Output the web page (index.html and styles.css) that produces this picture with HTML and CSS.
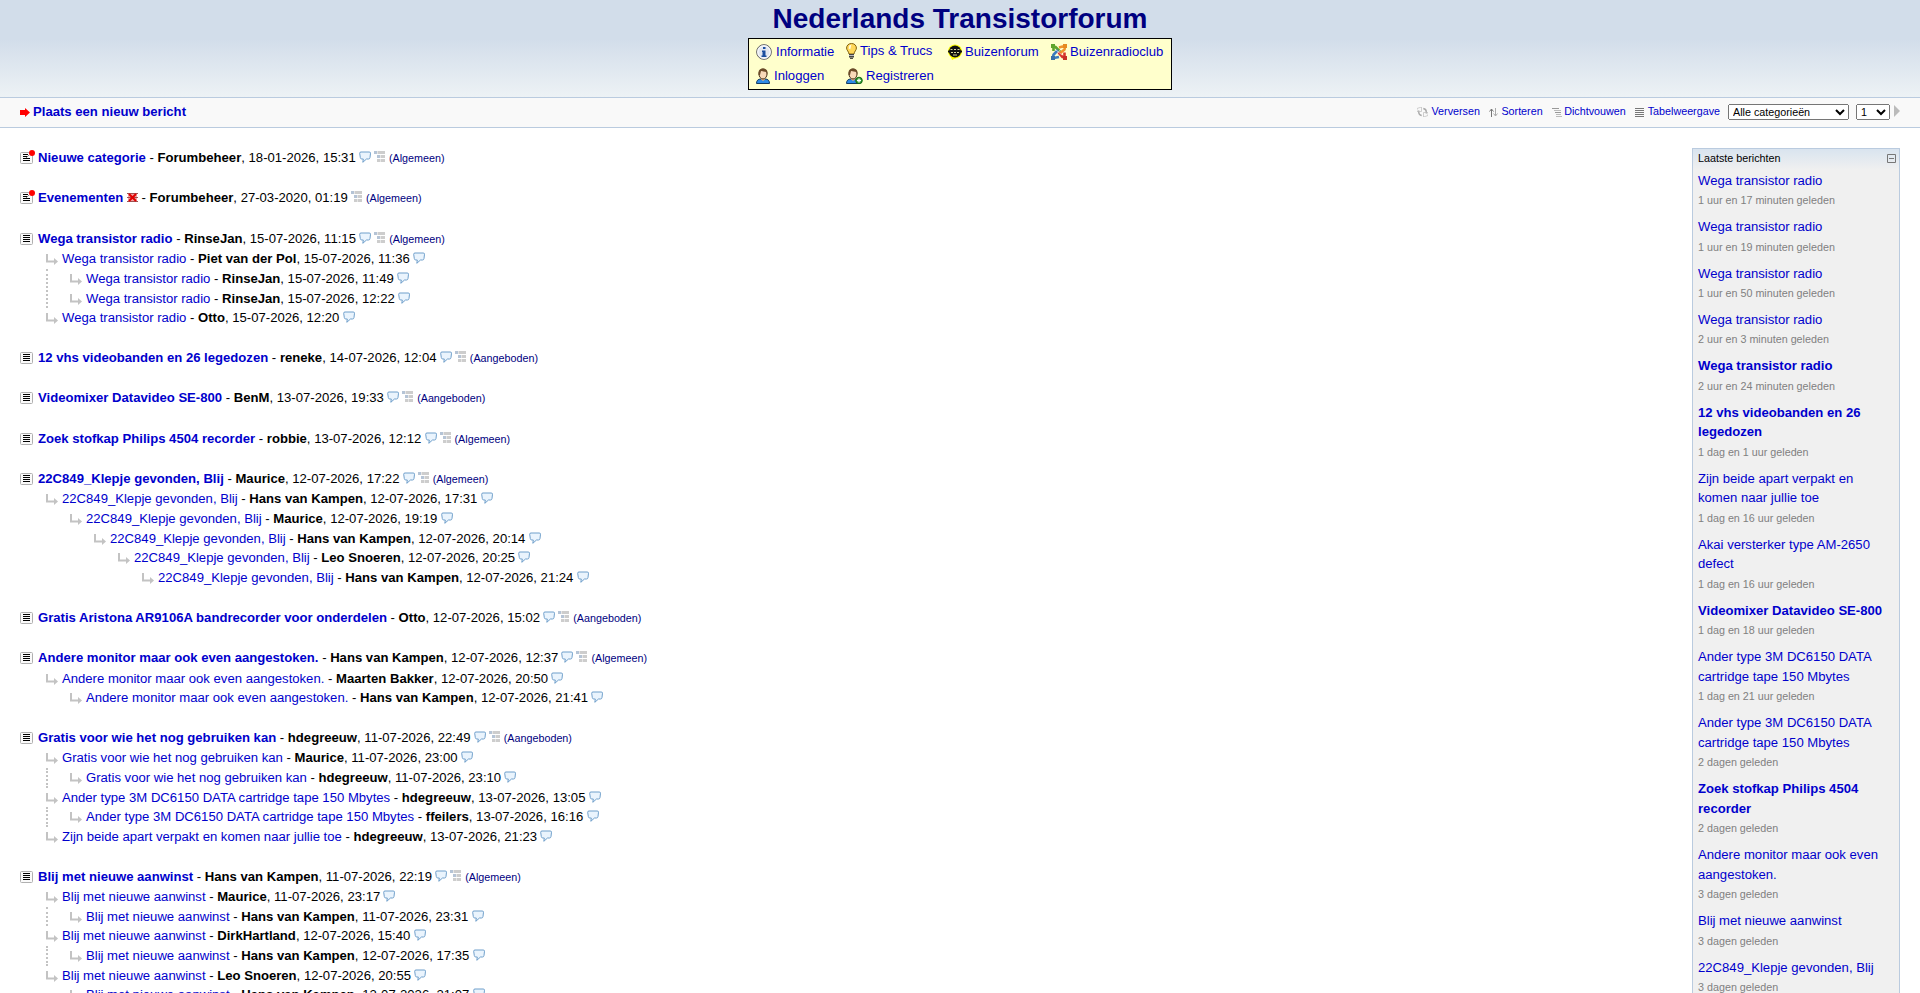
FILE: index.html
```html
<!DOCTYPE html>
<html lang="nl">
<head>
    <meta charset="UTF-8">
    <title>Nederlands Transistorforum</title>
    <link rel="stylesheet" href="styles.css">
</head>
<body>

    <!-- icons -->
    <svg class="symbols">
        <symbol id="thread" viewBox="0 0 13 12">
            <rect x=".5" y=".5" width="12" height="11" rx="1" fill="#fafafa" stroke="#b0b0b0"/>
            <path d="M3 2h7v1H3zM3 4h7v1H3zM3 6h7v1H3zM3 8h7v1H3z" fill="#000" shape-rendering="crispEdges"/>
        </symbol>
        <symbol id="sticky" viewBox="0 0 15 14">
            <rect x=".5" y="2.5" width="12" height="11" rx="1" fill="#fafafa" stroke="#b0b0b0"/>
            <path d="M3 4h5v1H3zM3 6h5v1H3zM3 8h7v1H3zM3 10h7v1H3z" fill="#000" shape-rendering="crispEdges"/>
            <path d="M6 8l3-3" stroke="#888"/>
            <circle cx="12" cy="3" r="3" fill="#f00"/>
        </symbol>
        <symbol id="reply" viewBox="0 0 12 11">
            <path d="M1 0v7.500H9" fill="none" stroke="#c3c3c3" stroke-width="2"/>
            <path d="M8 4l4 3.500-4 3.500z" fill="#c3c3c3"/>
        </symbol>
        <symbol id="bubble" viewBox="0 0 12 12">
            <path d="M2 1h8.200q1.400 0 1.300 1.200L11 6.500q-.2 1.500-1.500 1.500H7.500L3.800 11.300 4.300 8H2.800Q1.500 8 1.300 6.500L.7 2.300Q.6 1 2 1z" fill="#eaf4fd" stroke="#6f9fcb"/>
        </symbol>
        <symbol id="tree" viewBox="0 0 12 12">
            <path d="M0 0h3v3H0zM3 4h3v3H3z" fill="#b5c4d6"/>
            <path d="M3.500 0H11v3H3.500zM6.500 4H11v3H6.500zM3 8h3v3H3zM6.500 8H11v3H6.500z" fill="#cdcdcd"/>
        </symbol>
        <symbol id="closed" viewBox="0 0 11 9">
            <path d="M1 1h9v7H1z" fill="#f3a3a3"/>
            <path d="M0 .5h11M0 8.500h11M0 4.500h11" stroke="#a05050"/>
            <path d="M2 1l7 7M9 1L2 8" stroke="#e00000" stroke-width="2"/>
        </symbol>
    </svg>

    <div id="top">
        <h1>Nederlands Transistorforum</h1>
        <div class="menu">
            <a class="info" href="#"><svg width="16" height="16" viewBox="0 0 16 16"><circle cx="8" cy="8" r="7.400" fill="#e3e7ef" stroke="#666"/><circle cx="8" cy="8" r="6.200" fill="none" stroke="#fff"/><path d="M7 3h2.500v2H7zM6 6.500h3.500v5h1V13H5.500v-1.500h1V8H6z" fill="#1c4fa0"/></svg>Informatie</a>
            <a class="tips" href="#"><svg width="11" height="16" viewBox="0 0 11 16"><path d="M5.500.5C2.500.5.600 2.500.600 5c0 2.500 2.100 3.200 2.400 6h5c.3-2.800 2.400-3.500 2.400-6C10.400 2.500 8.500.5 5.500.5z" fill="#ffd95a" stroke="#80600f"/><path d="M3.300 2.500l2-.7-1 4.500-1.600-.8z" fill="#fffbe0"/><path d="M3 11h5v3.500H3z" fill="#444"/><path d="M3 12.500h5" stroke="#bbb"/><path d="M4 15.300h3" stroke="#222"/></svg>Tips &amp; Trucs</a>
            <a class="tubes" href="#"><svg width="14" height="16" viewBox="0 0 14 16"><circle cx="7" cy="7.500" r="7" fill="#ff0"/><path d="M3 13h7l-6 3z" fill="#ff0"/><circle cx="7" cy="7.500" r="6" fill="#111"/><path d="M0 7.500h14" stroke="#111" stroke-width="2"/><path d="M2.500 5.500h2M6 5.500h2M9.500 5.500h2M3 8.500h2M6 8.500h2M9 8.500h2M5 11h4" stroke="#d5d59a"/></svg>Buizenforum</a>
            <a class="club" href="#"><svg width="16" height="16" viewBox="0 0 16 16"><g fill="none" stroke-width="2.600"><path d="M2.500 7V4.500q0-2 2-1.500l5 5" stroke="#5fa52c"/><path d="M8 3.500l3.500-1q3 0 2 3L8 10" stroke="#f0932b"/><path d="M13.500 8.500v3q0 2-2 1.500L7 8" stroke="#d8342b"/><path d="M8 13l-4 .8q-2.500-.3-1.500-3L7 6" stroke="#3a7cbf"/></g><path d="M5 6l6 5M10 5l-5 6" stroke="#fff" stroke-width=".6"/><path d="M0 0h4v4H0z" fill="#5fa52c"/><path d="M12 0h4v4h-4z" fill="#e58a20"/><path d="M12 12h4v4h-4z" fill="#c62f26"/><path d="M0 12h4v4H0z" fill="#376fa8"/></svg>Buizenradioclub</a>
            <a class="login" href="#"><svg width="14" height="16" viewBox="0 0 14 16"><path d="M.5 15.500c0-3 1.500-4.500 4.500-4.500h4c3 0 4.500 1.500 4.500 4.500z" fill="#2f8be6" stroke="#123a60"/><path d="M5 9h4v2.500L7 13l-2-1.500z" fill="#e3b486"/><ellipse cx="7" cy="6" rx="4" ry="5" fill="#f8d9b8" stroke="#4b3018"/><path d="M2.500 7V4Q3 .5 7 .5T11.500 4v3L10.500 4 5 3 4 7z" fill="#6b4a28"/></svg>Inloggen</a>
            <a class="register" href="#"><svg width="17" height="16" viewBox="0 0 17 16"><path d="M.5 15.500c0-3 1.500-4.500 4.500-4.500h4c3 0 4.500 1.500 4.500 4.500z" fill="#2f8be6" stroke="#123a60"/><path d="M5 9h4v2.500L7 13l-2-1.500z" fill="#e3b486"/><ellipse cx="7" cy="6" rx="4" ry="5" fill="#f8d9b8" stroke="#4b3018"/><path d="M2.500 7V4Q3 .5 7 .5T11.500 4v3L10.500 4 5 3 4 7z" fill="#6b4a28"/><circle cx="13" cy="12.500" r="3.300" fill="#2f9e2f" stroke="#176617"/><path d="M13 10.500v4M11 12.500h4" stroke="#fff" stroke-width="1.300"/></svg>Registreren</a>
        </div>
    </div>

    <div id="topnav">
        <a class="new" href="#"><svg width="10" height="9" viewBox="0 0 10 9"><path d="M0 2h5V0l5 4.500L5 9V7H0z" fill="#f00"/></svg>Plaats een nieuw bericht</a>
        <div class="tools">
            <a class="refresh" href="#"><svg width="11" height="10" viewBox="0 0 11 10"><path d="M1.700 3.500v1.500q0 3 3 3.500M9.300 6.500V5q0-3-3-3.500" fill="none" stroke="#aaa" stroke-width="1.400"/><path d="M0 4.500h4.500V0L0 1.500zM11 5.500H6.500V10L11 8.500z" fill="none" stroke="#bbb" stroke-width=".7"/></svg>Verversen</a>
            <a class="order" href="#"><svg width="9" height="9" viewBox="0 0 9 9"><path d="M2.500 9V1M.5 3.500l2-2.500 2 2.500" fill="none" stroke="#777"/><path d="M6.500 0v8M4.500 5.500l2 2.500 2-2.500" fill="none" stroke="#aaa"/></svg>Sorteren</a>
            <a class="fold" href="#"><svg width="10" height="9" viewBox="0 0 10 9"><path d="M0 .5h7M3 4.500h6" stroke="#999"/><path d="M2 2.500h7M4 6.500h5M4 8.500h6" stroke="#bbb"/></svg>Dichtvouwen</a>
            <a class="table" href="#"><svg width="9" height="9" viewBox="0 0 9 9"><path d="M0 .5h9M0 2.500h9M0 4.500h9M0 6.500h9M0 8.500h9" stroke="#777"/></svg>Tabelweergave</a>
            <select class="category"><option>Alle categorieën</option></select>
            <select class="page"><option>1</option></select>
            <svg class="next" width="6" height="12" viewBox="0 0 6 12"><path d="M0 0l6 6-6 6z" fill="#bbb"/></svg>
        </div>
    </div>

    <div id="content">
        <div id="threads">

            <div class="thread">
                <p class="root"><svg class="st"><use href="#sticky"/></svg><a href="#">Nieuwe categorie</a> - <b>Forumbeheer</b>, 18-01-2026, 15:31 <svg class="bb"><use href="#bubble"/></svg><svg class="tr"><use href="#tree"/></svg><a class="cat" href="#">(Algemeen)</a></p>
            </div>

            <div class="thread">
                <p class="root"><svg class="st"><use href="#sticky"/></svg><a href="#">Evenementen</a> <svg class="cl"><use href="#closed"/></svg> - <b>Forumbeheer</b>, 27-03-2020, 01:19 <svg class="tr first"><use href="#tree"/></svg><a class="cat" href="#">(Algemeen)</a></p>
            </div>

            <div class="thread">
                <p class="root"><svg class="th"><use href="#thread"/></svg><a href="#">Wega transistor radio</a> - <b>RinseJan</b>, 15-07-2026, 11:15 <svg class="bb"><use href="#bubble"/></svg><svg class="tr"><use href="#tree"/></svg><a class="cat" href="#">(Algemeen)</a></p>
                <ul>
                    <li><p><svg class="re"><use href="#reply"/></svg><a href="#">Wega transistor radio</a> - <b>Piet van der Pol</b>, 15-07-2026, 11:36 <svg class="bb"><use href="#bubble"/></svg></p>
                        <ul class="line">
                            <li><p><svg class="re"><use href="#reply"/></svg><a href="#">Wega transistor radio</a> - <b>RinseJan</b>, 15-07-2026, 11:49 <svg class="bb"><use href="#bubble"/></svg></p></li>
                            <li><p><svg class="re"><use href="#reply"/></svg><a href="#">Wega transistor radio</a> - <b>RinseJan</b>, 15-07-2026, 12:22 <svg class="bb"><use href="#bubble"/></svg></p></li>
                        </ul>
                    </li>
                    <li><p><svg class="re"><use href="#reply"/></svg><a href="#">Wega transistor radio</a> - <b>Otto</b>, 15-07-2026, 12:20 <svg class="bb"><use href="#bubble"/></svg></p></li>
                </ul>
            </div>

            <div class="thread">
                <p class="root"><svg class="th"><use href="#thread"/></svg><a href="#">12 vhs videobanden en 26 legedozen</a> - <b>reneke</b>, 14-07-2026, 12:04 <svg class="bb"><use href="#bubble"/></svg><svg class="tr"><use href="#tree"/></svg><a class="cat" href="#">(Aangeboden)</a></p>
            </div>

            <div class="thread">
                <p class="root"><svg class="th"><use href="#thread"/></svg><a href="#">Videomixer Datavideo SE-800</a> - <b>BenM</b>, 13-07-2026, 19:33 <svg class="bb"><use href="#bubble"/></svg><svg class="tr"><use href="#tree"/></svg><a class="cat" href="#">(Aangeboden)</a></p>
            </div>

            <div class="thread">
                <p class="root"><svg class="th"><use href="#thread"/></svg><a href="#">Zoek stofkap Philips 4504 recorder</a> - <b>robbie</b>, 13-07-2026, 12:12 <svg class="bb"><use href="#bubble"/></svg><svg class="tr"><use href="#tree"/></svg><a class="cat" href="#">(Algemeen)</a></p>
            </div>

            <div class="thread">
                <p class="root"><svg class="th"><use href="#thread"/></svg><a href="#">22C849_Klepje gevonden, Blij</a> - <b>Maurice</b>, 12-07-2026, 17:22 <svg class="bb"><use href="#bubble"/></svg><svg class="tr"><use href="#tree"/></svg><a class="cat" href="#">(Algemeen)</a></p>
                <ul>
                    <li><p><svg class="re"><use href="#reply"/></svg><a href="#">22C849_Klepje gevonden, Blij</a> - <b>Hans van Kampen</b>, 12-07-2026, 17:31 <svg class="bb"><use href="#bubble"/></svg></p>
                        <ul>
                            <li><p><svg class="re"><use href="#reply"/></svg><a href="#">22C849_Klepje gevonden, Blij</a> - <b>Maurice</b>, 12-07-2026, 19:19 <svg class="bb"><use href="#bubble"/></svg></p>
                                <ul>
                                    <li><p><svg class="re"><use href="#reply"/></svg><a href="#">22C849_Klepje gevonden, Blij</a> - <b>Hans van Kampen</b>, 12-07-2026, 20:14 <svg class="bb"><use href="#bubble"/></svg></p>
                                        <ul>
                                            <li><p><svg class="re"><use href="#reply"/></svg><a href="#">22C849_Klepje gevonden, Blij</a> - <b>Leo Snoeren</b>, 12-07-2026, 20:25 <svg class="bb"><use href="#bubble"/></svg></p>
                                                <ul>
                                                    <li><p><svg class="re"><use href="#reply"/></svg><a href="#">22C849_Klepje gevonden, Blij</a> - <b>Hans van Kampen</b>, 12-07-2026, 21:24 <svg class="bb"><use href="#bubble"/></svg></p></li>
                                                </ul>
                                            </li>
                                        </ul>
                                    </li>
                                </ul>
                            </li>
                        </ul>
                    </li>
                </ul>
            </div>

            <div class="thread">
                <p class="root"><svg class="th"><use href="#thread"/></svg><a href="#">Gratis Aristona AR9106A bandrecorder voor onderdelen</a> - <b>Otto</b>, 12-07-2026, 15:02 <svg class="bb"><use href="#bubble"/></svg><svg class="tr"><use href="#tree"/></svg><a class="cat" href="#">(Aangeboden)</a></p>
            </div>

            <div class="thread">
                <p class="root"><svg class="th"><use href="#thread"/></svg><a href="#">Andere monitor maar ook even aangestoken.</a> - <b>Hans van Kampen</b>, 12-07-2026, 12:37 <svg class="bb"><use href="#bubble"/></svg><svg class="tr"><use href="#tree"/></svg><a class="cat" href="#">(Algemeen)</a></p>
                <ul>
                    <li><p><svg class="re"><use href="#reply"/></svg><a href="#">Andere monitor maar ook even aangestoken.</a> - <b>Maarten Bakker</b>, 12-07-2026, 20:50 <svg class="bb"><use href="#bubble"/></svg></p>
                        <ul>
                            <li><p><svg class="re"><use href="#reply"/></svg><a href="#">Andere monitor maar ook even aangestoken.</a> - <b>Hans van Kampen</b>, 12-07-2026, 21:41 <svg class="bb"><use href="#bubble"/></svg></p></li>
                        </ul>
                    </li>
                </ul>
            </div>

            <div class="thread">
                <p class="root"><svg class="th"><use href="#thread"/></svg><a href="#">Gratis voor wie het nog gebruiken kan</a> - <b>hdegreeuw</b>, 11-07-2026, 22:49 <svg class="bb"><use href="#bubble"/></svg><svg class="tr"><use href="#tree"/></svg><a class="cat" href="#">(Aangeboden)</a></p>
                <ul>
                    <li><p><svg class="re"><use href="#reply"/></svg><a href="#">Gratis voor wie het nog gebruiken kan</a> - <b>Maurice</b>, 11-07-2026, 23:00 <svg class="bb"><use href="#bubble"/></svg></p>
                        <ul class="line">
                            <li><p><svg class="re"><use href="#reply"/></svg><a href="#">Gratis voor wie het nog gebruiken kan</a> - <b>hdegreeuw</b>, 11-07-2026, 23:10 <svg class="bb"><use href="#bubble"/></svg></p></li>
                        </ul>
                    </li>
                    <li><p><svg class="re"><use href="#reply"/></svg><a href="#">Ander type 3M DC6150 DATA cartridge tape 150 Mbytes</a> - <b>hdegreeuw</b>, 13-07-2026, 13:05 <svg class="bb"><use href="#bubble"/></svg></p>
                        <ul class="line">
                            <li><p><svg class="re"><use href="#reply"/></svg><a href="#">Ander type 3M DC6150 DATA cartridge tape 150 Mbytes</a> - <b>ffeilers</b>, 13-07-2026, 16:16 <svg class="bb"><use href="#bubble"/></svg></p></li>
                        </ul>
                    </li>
                    <li><p><svg class="re"><use href="#reply"/></svg><a href="#">Zijn beide apart verpakt en komen naar jullie toe</a> - <b>hdegreeuw</b>, 13-07-2026, 21:23 <svg class="bb"><use href="#bubble"/></svg></p></li>
                </ul>
            </div>

            <div class="thread">
                <p class="root"><svg class="th"><use href="#thread"/></svg><a href="#">Blij met nieuwe aanwinst</a> - <b>Hans van Kampen</b>, 11-07-2026, 22:19 <svg class="bb"><use href="#bubble"/></svg><svg class="tr"><use href="#tree"/></svg><a class="cat" href="#">(Algemeen)</a></p>
                <ul>
                    <li><p><svg class="re"><use href="#reply"/></svg><a href="#">Blij met nieuwe aanwinst</a> - <b>Maurice</b>, 11-07-2026, 23:17 <svg class="bb"><use href="#bubble"/></svg></p>
                        <ul class="line">
                            <li><p><svg class="re"><use href="#reply"/></svg><a href="#">Blij met nieuwe aanwinst</a> - <b>Hans van Kampen</b>, 11-07-2026, 23:31 <svg class="bb"><use href="#bubble"/></svg></p></li>
                        </ul>
                    </li>
                    <li><p><svg class="re"><use href="#reply"/></svg><a href="#">Blij met nieuwe aanwinst</a> - <b>DirkHartland</b>, 12-07-2026, 15:40 <svg class="bb"><use href="#bubble"/></svg></p>
                        <ul class="line">
                            <li><p><svg class="re"><use href="#reply"/></svg><a href="#">Blij met nieuwe aanwinst</a> - <b>Hans van Kampen</b>, 12-07-2026, 17:35 <svg class="bb"><use href="#bubble"/></svg></p></li>
                        </ul>
                    </li>
                    <li><p><svg class="re"><use href="#reply"/></svg><a href="#">Blij met nieuwe aanwinst</a> - <b>Leo Snoeren</b>, 12-07-2026, 20:55 <svg class="bb"><use href="#bubble"/></svg></p>
                        <ul>
                            <li><p><svg class="re"><use href="#reply"/></svg><a href="#">Blij met nieuwe aanwinst</a> - <b>Hans van Kampen</b>, 12-07-2026, 21:07 <svg class="bb"><use href="#bubble"/></svg></p></li>
                        </ul>
                    </li>
                </ul>
            </div>
        </div>

        <div id="latest">
            <h3>Laatste berichten <svg width="9" height="9" viewBox="0 0 9 9"><path d="M.5.5h8v8h-8zM2 4.500h5" fill="none" stroke="#777"/></svg></h3>
            <ul>
                <li><a href="#">Wega transistor radio</a><span>1 uur en 17 minuten geleden</span></li>
                <li><a href="#">Wega transistor radio</a><span>1 uur en 19 minuten geleden</span></li>
                <li><a href="#">Wega transistor radio</a><span>1 uur en 50 minuten geleden</span></li>
                <li><a href="#">Wega transistor radio</a><span>2 uur en 3 minuten geleden</span></li>
                <li><a class="start" href="#">Wega transistor radio</a><span>2 uur en 24 minuten geleden</span></li>
                <li><a class="start" href="#">12 vhs videobanden en 26 legedozen</a><span>1 dag en 1 uur geleden</span></li>
                <li><a href="#">Zijn beide apart verpakt en komen naar jullie toe</a><span>1 dag en 16 uur geleden</span></li>
                <li><a href="#">Akai versterker type AM-2650 defect</a><span>1 dag en 16 uur geleden</span></li>
                <li><a class="start" href="#">Videomixer Datavideo SE-800</a><span>1 dag en 18 uur geleden</span></li>
                <li><a href="#">Ander type 3M DC6150 DATA cartridge tape 150 Mbytes</a><span>1 dag en 21 uur geleden</span></li>
                <li><a href="#">Ander type 3M DC6150 DATA cartridge tape 150 Mbytes</a><span>2 dagen geleden</span></li>
                <li><a class="start" href="#">Zoek stofkap Philips 4504 recorder</a><span>2 dagen geleden</span></li>
                <li><a href="#">Andere monitor maar ook even aangestoken.</a><span>3 dagen geleden</span></li>
                <li><a href="#">Blij met nieuwe aanwinst</a><span>3 dagen geleden</span></li>
                <li><a href="#">22C849_Klepje gevonden, Blij</a><span>3 dagen geleden</span></li>
            </ul>
        </div>
    </div>

</body>
</html>
```

FILE: styles.css
```css
* {
    box-sizing: border-box;
}

body {
    margin: 0;
    height: 993px;
    overflow: hidden;
    background: #fff;
    color: #000;
    font-family: "Liberation Sans", Arial, sans-serif;
    font-size: 13.12px;
    line-height: 19.68px;
}

h1, h3, p, ul {
    margin: 0;
    padding: 0;
}

ul {
    list-style: none;
}

a {
    color: #0000cc;
    text-decoration: none;
}

.symbols {
    display: none;
}

/* header */
#top {
    height: 98px;
    border-bottom: 1px solid #bacbdf;
    background: linear-gradient(to bottom, #d2ddea 0%, #d2ddea 40%, #edf2f5 100%);
}

#top h1 {
    height: 38px;
    font-size: 28px;
    line-height: 37px;
    text-align: center;
    color: #000080;
}

.menu {
    width: 424px;
    height: 52px;
    margin: 0 auto;
    padding: 1px 7px;
    border: 1px solid #000;
    background: #ffffcc;
    display: grid;
    grid-template-columns: 90px 102px 103px auto;
    grid-template-rows: 24px 24px;
}

.menu a {
    display: flex;
    align-items: center;
    gap: 3px;
    white-space: nowrap;
}

.menu .info, .menu .login {
    gap: 4px;
}

.menu .tips {
    padding-bottom: 2px;
}

/* bar under the header */
#topnav {
    height: 30px;
    padding: 0 20px;
    border-bottom: 1px solid #bacbdf;
    background: #f9f9f9;
    display: flex;
    justify-content: space-between;
}

#topnav a {
    display: flex;
    align-items: center;
}

.new {
    gap: 3px;
    height: 28px;
    font-weight: bold;
}

.tools {
    height: 28px;
    display: flex;
    align-items: center;
    font-size: 10.76px;
}

.tools a {
    gap: 4px;
    margin-right: 9.5px;
}

.tools a.order {
    gap: 3px;
}

.tools a.fold {
    gap: 2px;
    margin-right: 9px;
}

.tools a.table {
    gap: 4px;
    margin-right: 8px;
}

.tools select {
    height: 16px;
    padding: 0;
    font-family: inherit;
    font-size: 10.76px;
}

.category {
    width: 121px;
    margin: 0 7px 0 0;
}

.page {
    width: 34px;
    margin: 0 4px 0 0;
}

.next {
    margin-bottom: 3px;
}

#content {
    display: flex;
    justify-content: space-between;
    align-items: flex-start;
    padding: 20px 20px 0;
}

/* thread list */
.thread {
    margin-bottom: 20px;
}

.thread p {
    height: 19.68px;
    white-space: nowrap;
}

.thread p.root {
    height: 20.4px;
}

.root > a:not(.cat), .start {
    font-weight: bold;
}

.thread > ul {
    padding-left: 26px;
}

.thread ul ul {
    padding-left: 24px;
}

.thread ul ul.line {
    padding-left: 22px;
    border-left: 2px dotted #c3c3c3;
}

.thread .cat {
    font-size: 10.76px;
    color: #000080;
}

.th {
    width: 13px;
    height: 12px;
    margin-right: 5px;
    vertical-align: -2px;
}

.st {
    width: 15px;
    height: 14px;
    margin-right: 3px;
    vertical-align: -2px;
}

.re {
    width: 12px;
    height: 11px;
    margin-right: 4px;
    vertical-align: -2px;
}

.bb {
    width: 12px;
    height: 12px;
    margin-left: -.4px;
    vertical-align: -1px;
}

.tr {
    width: 12px;
    height: 12px;
    margin: 0 3px;
    vertical-align: -1px;
}

.tr.first {
    margin-left: -.5px;
}

.cl {
    width: 11px;
    height: 9px;
}

/* sidebar */
#latest {
    width: 208px;
    height: 860px;
    border: 1px solid #bacbdf;
    background: #f0f0f0 linear-gradient(to bottom, #d9e4ef, #f0f0f0) 0 0 / 100% 21px no-repeat;
}

#latest h3 {
    display: flex;
    justify-content: space-between;
    align-items: center;
    height: 21.8px;
    padding: 0 3px 3px 5px;
    font-size: 10.76px;
    font-weight: normal;
}

#latest li {
    padding: 0 5px;
    margin-bottom: 6.3px;
}

#latest a {
    display: block;
}

#latest span {
    display: block;
    padding-top: .7px;
    font-size: 10.76px;
    color: #808080;
}
```
